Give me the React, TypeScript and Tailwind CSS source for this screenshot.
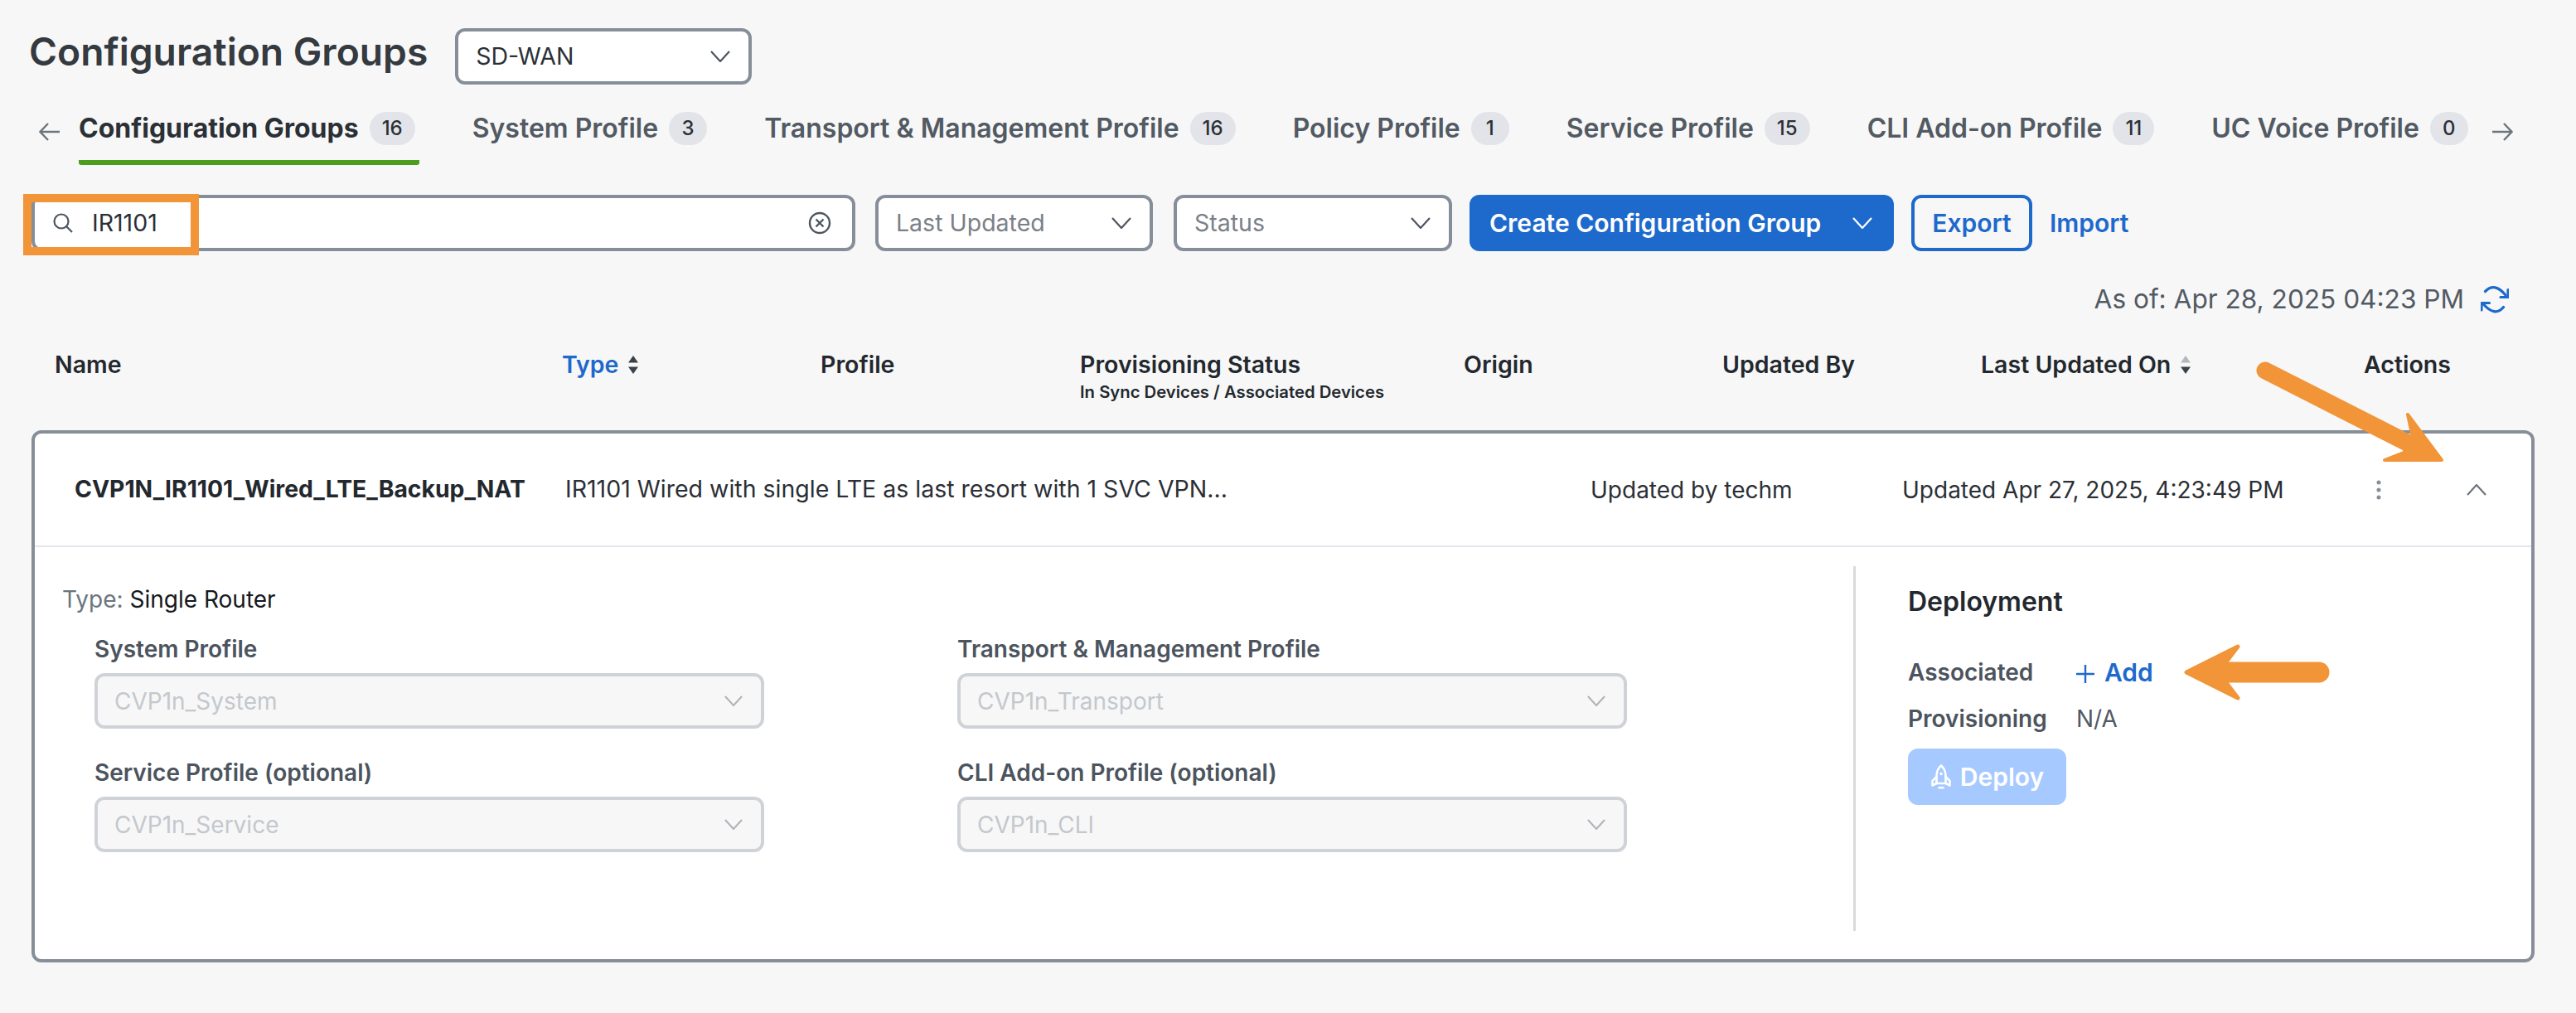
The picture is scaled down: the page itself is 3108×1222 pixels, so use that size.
import React from 'react';

const tabs = [
  { label: 'Configuration Groups', count: 16, active: true },
  { label: 'System Profile', count: 3 },
  { label: 'Transport & Management Profile', count: 16 },
  { label: 'Policy Profile', count: 1 },
  { label: 'Service Profile', count: 15 },
  { label: 'CLI Add-on Profile', count: 11 },
  { label: 'UC Voice Profile', count: 0 },
];

const Chevron: React.FC<{ className?: string; up?: boolean }> = ({ className = '', up }) => (
  <svg viewBox="0 0 24 14" fill="none" stroke="currentColor" strokeWidth={2.2} className={className}>
    <polyline points={up ? '1,13 12,1 23,13' : '1,1 12,13 23,1'} />
  </svg>
);

const Sort: React.FC<{ top: string; bottom: string }> = ({ top, bottom }) => (
  <svg viewBox="0 0 16 24" className="w-[16px] h-[24px]">
    <polygon points="8,1 14,9.5 2,9.5" fill={top} />
    <polygon points="8,23 14,14.5 2,14.5" fill={bottom} />
  </svg>
);

const Select: React.FC<{ text: string; className: string; textClass?: string }> = ({ text, className, textClass = 'text-[#7b8087]' }) => (
  <div className={`flex items-center justify-between bg-white border-4 border-[#868f99] rounded-[12px] h-[68px] pl-[21px] pr-[22px] ${className}`}>
    <span className={`text-[28.5px] ${textClass}`}>{text}</span>
    <Chevron className="w-[24px] h-[14px] text-[#4d555e]" />
  </div>
);

const ProfileField: React.FC<{ label: string; value: string }> = ({ label, value }) => (
  <div>
    <div className="text-[28px] leading-[34px] font-semibold text-[#4c545e] mb-[12px]">{label}</div>
    <div className="flex items-center justify-between w-[808px] h-[67px] bg-[#f7f7f7] border-4 border-[#cfd3d8] rounded-[12px] pl-[20px] pr-[22px]">
      <span className="text-[28px] text-[#c4c8cd]">{value}</span>
      <Chevron className="w-[22px] h-[13px] text-[#aeb3b9]" />
    </div>
  </div>
);

const Rocket = () => (
  <svg viewBox="0 0 26 30" fill="none" stroke="white" strokeWidth={2.6} strokeLinejoin="round" strokeLinecap="round" className="w-[26px] h-[30px]">
    <path d="M13 1.5C9 5 7.5 9.500 7.500 14v9h11v-9c0-4.500-1.500-9-5.500-12.500z" />
    <circle cx="13" cy="11.500" r="1.800" fill="white" stroke="none" />
    <path d="M7.500 15L2.500 20v5.500l5-2.500M18.500 15l5 5v5.500l-5-2.500" />
    <path d="M10.500 28.300h5" />
  </svg>
);

const Refresh = () => (
  <svg viewBox="13 9 34 33" fill="none" stroke="#1d69cc" strokeWidth={3.2} strokeLinecap="round" strokeLinejoin="round" className="w-[34px] h-[33px] ml-[20px]">
    <path d="M18.500 15.500Q30 4 43 20" />
    <path d="M46 13.500V22.500H37" />
    <path d="M40.500 34.500Q30 47 15.500 30" />
    <path d="M14 38V29.500H23.500" />
  </svg>
);

export default function App() {
  return (
    <div className="relative w-[3108px] h-[1222px] overflow-hidden bg-[#f7f7f7] font-['Inter',sans-serif]">
      {/* Title */}
      <div className="flex items-center pt-[34px] pl-[35px]">
        <h1 className="text-[46.2px] leading-[56px] mb-[12px] font-semibold text-[#343a40]">Configuration Groups</h1>
        <Select text="SD-WAN" className="w-[358px] ml-[33px]" textClass="text-[#2b3036]" />
      </div>

      {/* Tabs */}
      <div className="flex items-start mt-[20px] pl-[47px] h-[77px]">
        <svg viewBox="0 0 26 22" fill="none" stroke="#6c757d" strokeWidth={2.4} className="w-[26px] h-[22px] mt-[26px] mr-[22px] shrink-0">
          <path d="M25 11H2M11 1L1.500 11 11 21" />
        </svg>
        <div className="flex gap-[69px]">
          {tabs.map((t) => (
            <div key={t.label} className={`flex items-center gap-[13px] h-[77px] shrink-0 ${t.active ? 'pb-[6px] border-b-[6px] border-[#4a9d1f] rounded-b-[3px] pr-[5px] mr-[-5px]' : 'pb-[12px]'}`}>
              <span className={`text-[32px] whitespace-nowrap ${t.active ? 'font-bold text-[#2b3036]' : 'font-semibold text-[#525a63]'}`}>{t.label}</span>
              <span className="flex items-center justify-center h-[40px] min-w-[46px] px-[15px] rounded-full bg-[#e2e4e9] text-[24px] font-medium text-[#2b3036]">{t.count}</span>
            </div>
          ))}
        </div>
        <svg viewBox="0 0 26 22" fill="none" stroke="#6c757d" strokeWidth={2.4} className="w-[26px] h-[22px] mt-[26px] ml-[28px] shrink-0">
          <path d="M1 11h23M15 1l9.500 10L15 21" />
        </svg>
      </div>

      {/* Filters */}
      <div className="flex items-center mt-[36px] pl-[38px]">
        <div className="relative flex items-center w-[994px] h-[68px] bg-white border-4 border-[#868f99] rounded-[12px] pl-[22px] pr-[28px]">
          <svg viewBox="0 0 24 24" fill="none" stroke="#4d555e" strokeWidth={2.2} className="w-[24px] h-[24px] shrink-0">
            <circle cx="10" cy="10" r="8.500" />
            <path d="M16 16l7 7" />
          </svg>
          <span className="ml-[23px] text-[28.5px] text-[#2b3036] flex-1">IR1101</span>
          <svg viewBox="0 0 28 28" fill="none" stroke="#4d555e" strokeWidth={2.4} className="w-[28px] h-[28px] mr-[-3px]">
            <circle cx="14" cy="14" r="12" />
            <path d="M9.500 9.500l9 9M18.500 9.500l-9 9" />
          </svg>
          {/* orange annotation */}
          <div className="absolute left-[-14px] top-[-5px] w-[212px] h-[74px] border-[10px] border-[#f29438]" />
        </div>
        <Select text="Last Updated" className="w-[335px] ml-[24px]" />
        <Select text="Status" className="w-[336px] ml-[25px]" />
        <div className="flex items-center justify-between w-[512px] h-[68px] ml-[21px] bg-[#1d69cc] rounded-[12px] pl-[24px] pr-[26px]">
          <span className="text-[30px] font-semibold text-white whitespace-nowrap">Create Configuration Group</span>
          <Chevron className="w-[24px] h-[14px] text-white" />
        </div>
        <div className="flex items-center justify-center w-[146px] h-[68px] ml-[21px] border-4 border-[#1d69cc] rounded-[12px] text-[30px] font-semibold text-[#1d69cc]">Export</div>
        <span className="ml-[21px] text-[30px] font-semibold text-[#1d69cc]">Import</span>
      </div>

      {/* As of */}
      <div className="flex items-center justify-end mt-[38px] pr-[81px] h-[40px]">
        <span className="text-[31.6px] text-[#525a63]">As of: Apr 28, 2025 04:23 PM</span>
        <Refresh />
      </div>

      {/* Table header */}
      <div className="grid grid-cols-[612px_312px_313px_463px_312px_312px_462px_1fr] pl-[66px] mt-[39px] text-[28.5px] font-semibold text-[#23282e] h-[60px]">
        <div className="leading-[40px]">Name</div>
        <div className="flex items-start gap-[10px] leading-[40px] text-[#1d69cc]">
          Type
          <span className="mt-[8px]"><Sort top="#3b4148" bottom="#3b4148" /></span>
        </div>
        <div className="leading-[40px]">Profile</div>
        <div>
          <div className="leading-[40px]">Provisioning Status</div>
          <div className="text-[20.3px] leading-[26px] whitespace-nowrap">In Sync Devices / Associated Devices</div>
        </div>
        <div className="leading-[40px]">Origin</div>
        <div className="leading-[40px]">Updated By</div>
        <div className="flex items-start gap-[10px] leading-[40px]">
          Last Updated On
          <span className="mt-[8px]"><Sort top="#b3b8be" bottom="#3b4148" /></span>
        </div>
        <div className="leading-[40px]">Actions</div>
      </div>

      {/* Card */}
      <div className="mt-[39px] ml-[38px] w-[3020px] h-[642px] bg-white border-4 border-[#868f99] rounded-[12px] overflow-hidden">
        <div className="grid grid-cols-[592px_1237px_376px_574px_106px_1fr] items-center pl-[48px] h-[137px] border-b-2 border-[#e3e6ea] text-[28px] text-[#2b3036]">
          <div className="text-[28.3px] font-bold text-[#23282e] whitespace-nowrap">CVP1N_IR1101_Wired_LTE_Backup_NAT</div>
          <div className="text-[28.5px] whitespace-nowrap">IR1101 Wired with single LTE as last resort with 1 SVC VPN...</div>
          <div className="whitespace-nowrap">Updated by techm</div>
          <div className="whitespace-nowrap">Updated Apr 27, 2025, 4:23:49 PM</div>
          <svg viewBox="0 0 6 24" className="w-[6px] h-[24px] ml-[-2px]">
            <circle cx="3" cy="3" r="2.500" fill="#868f99" />
            <circle cx="3" cy="12" r="2.500" fill="#868f99" />
            <circle cx="3" cy="21" r="2.500" fill="#868f99" />
          </svg>
          <Chevron up className="w-[26px] h-[14px] text-[#6c757d]" />
        </div>
        <div className="flex">
          <div className="w-[2194px] pt-[46px] pl-[33px]">
            <div className="text-[28px] leading-[34px]">
              <span className="text-[#6c757d]">Type: </span>
              <span className="text-[#15181c]">Single Router</span>
            </div>
            <div className="grid grid-cols-[1041px_808px] gap-y-[36px] mt-[26px] ml-[39px]">
              <ProfileField label="System Profile" value="CVP1n_System" />
              <ProfileField label="Transport & Management Profile" value="CVP1n_Transport" />
              <ProfileField label="Service Profile (optional)" value="CVP1n_Service" />
              <ProfileField label="CLI Add-on Profile (optional)" value="CVP1n_CLI" />
            </div>
          </div>
          <div className="mt-[23px] w-[66px] h-[440px] border-l-[3px] border-[#d8dadd] shrink-0" />
          <div className="pt-[44px]">
            <div className="text-[32px] leading-[44px] font-semibold text-[#23282e]">Deployment</div>
            <div className="flex items-center mt-[43px] h-[40px]">
              <span className="w-[203px] text-[28px] font-semibold text-[#4c545e]">Associated</span>
              <svg viewBox="0 0 22 22" stroke="#1d69cc" strokeWidth={2.4} className="w-[22px] h-[22px] mt-[4px]">
                <path d="M11 0v22M0 11h22" />
              </svg>
              <span className="ml-[12px] text-[30px] font-semibold text-[#1d69cc]">Add</span>
            </div>
            <div className="flex items-center mt-[16px] h-[40px]">
              <span className="w-[203px] text-[28px] font-semibold text-[#4c545e]">Provisioning</span>
              <span className="text-[28px] text-[#525a63]">N/A</span>
            </div>
            <div className="flex items-center justify-center gap-[10px] mt-[16px] w-[191px] h-[68px] bg-[#a6c9ff] rounded-[12px]">
              <Rocket />
              <span className="text-[30px] font-semibold text-white">Deploy</span>
            </div>
          </div>
        </div>
      </div>

      {/* orange annotation arrows */}
      <svg viewBox="0 0 240 130" className="absolute left-[2720px] top-[436px] w-[240px] h-[130px]" fill="#f29438" stroke="#f29438" strokeLinejoin="round" strokeLinecap="round">
        <path d="M13 11L190 101" strokeWidth={21} fill="none" />
        <path d="M185 64L226 119L157 119L180 110L191 92Z" strokeWidth={4} />
      </svg>
      <svg viewBox="0 0 180 72" className="absolute left-[2632px] top-[775px] w-[180px] h-[72px]" fill="#f29438" stroke="#f29438" strokeLinejoin="round" strokeLinecap="round">
        <path d="M6 36L68 5L52 26H166a10 10 0 0 1 0 20H52L68 67Z" strokeWidth={5} />
      </svg>
    </div>
  );
}
